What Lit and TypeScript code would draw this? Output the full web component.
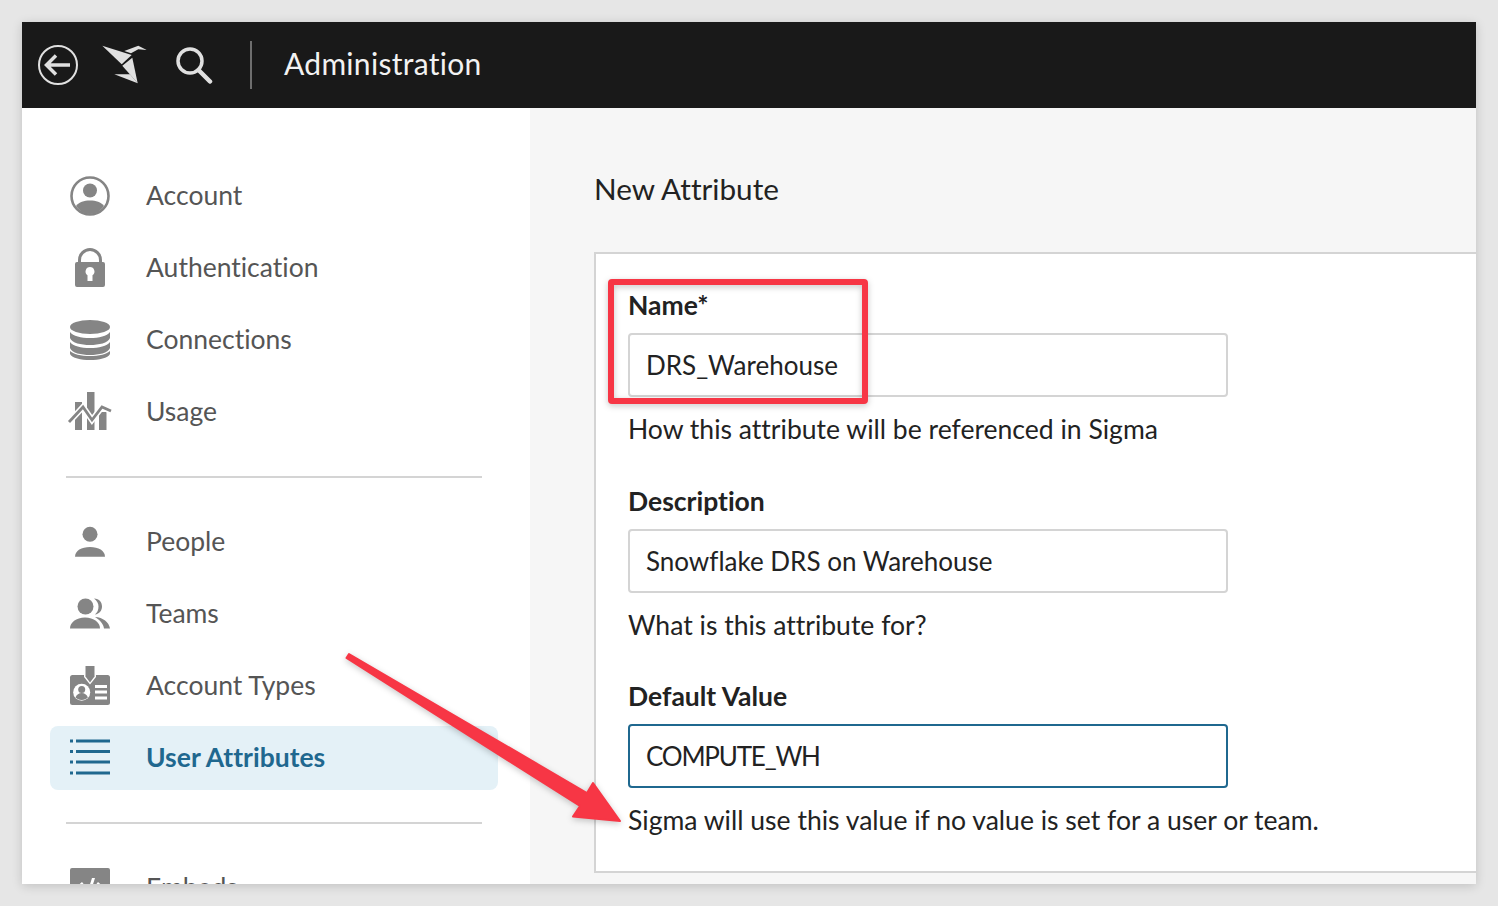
import { LitElement, html, css, svg } from "lit";
import { customElement } from "lit/decorators.js";

const icons: Record<string, unknown> = {
  account: svg`<circle cx="20" cy="20" r="18.5" fill="none" stroke="currentColor" stroke-width="2.6"/><circle cx="20" cy="14.5" r="7"/><path d="M6 30c3-4 8-5.500 14-5.500S31 26 34 30c-3.500 5-8 8-14 8S9.500 35 6 30z"/>`,
  lock: svg`<path d="M9.500 15v-3a10.500 10.500 0 0 1 21 0v3" fill="none" stroke="currentColor" stroke-width="3"/><path fill-rule="evenodd" d="M7 14h26a2 2 0 0 1 2 2v21a2 2 0 0 1-2 2H7a2 2 0 0 1-2-2V16a2 2 0 0 1 2-2zM20 19a4.500 4.500 0 0 0-2.500 8.200V33h5v-5.800A4.500 4.500 0 0 0 20 19z"/>`,
  db: svg`<ellipse cx="20" cy="7" rx="20" ry="7"/><path d="M0 12c3 4 11 6 20 6s17-2 20-6v6c-2 5-11 7-20 7S2 23 0 18z"/><path d="M0 22c3 4 11 6 20 6s17-2 20-6v6c-2 5-11 7-20 7S2 33 0 28z" /><path d="M0 31c3 3 11 5 20 5s17-2 20-5v3c-2 4-11 6-20 6S2 38 0 34z"/>`,
  usage: svg`<path d="M5 10h7v28H5zM17 0h7.500v38H17zM29 20h7.500v18H29z"/><path d="M-1 30L13 15l9 13 10-13 9 4" fill="none" stroke="#fff" stroke-width="6"/><path d="M-1 30L13 15l9 13 10-13 9 4" fill="none" stroke="currentColor" stroke-width="2.800"/>`,
  person: svg`<circle cx="20" cy="12.200" r="7.500"/><path d="M5 34.700c0-6 6.500-9.700 15-9.700s15 3.700 15 9.700z"/>`,
  teams: svg`<circle cx="15.500" cy="12.500" r="8"/><path d="M24 4.500c5.500 0 8 4 8 8s-2.500 7.500-7 8c2.500-2 3.500-5 3.500-8s-1.500-6-4.500-8z"/><path d="M0 34.500c0-6 6-11 15-11s15 5 15 11z"/><path d="M25 23c8 .5 14 5 15 11.500h-6c-.5-4.500-4-8.500-9-11.500z"/>`,
  types: svg`<rect x="0" y="9" width="40" height="30" rx="2.500"/><path d="M14 -1h12v12l-6 7.500-6-7.500z" fill="#fff"/><path d="M15.500 0h9v10.500L20 16.500l-4.500-6z"/><circle cx="11.700" cy="26.300" r="8.500" fill="#fff"/><circle cx="11.700" cy="23.500" r="3.500"/><path d="M5.500 31.500c1-3 3.500-4.500 6.200-4.500s5.200 1.500 6.200 4.500c-1.500 1.500-3.700 2.500-6.200 2.500s-4.700-1-6.200-2.500z"/><path d="M25 19h12v3H25zM25 24.500h12v3H25zM25 30.500h12v3H25z" fill="#fff"/>`,
  list: svg`<path d="M6 1.500h34v3H6zM6 12h34v3H6zM6 22.500h34v3H6zM6 33.500h34v3H6zM0 1.500h3v3H0zM0 12h3v3H0zM0 22.500h3v3H0zM0 33.500h3v3H0z"/>`,
  embed: svg`<path fill-rule="evenodd" d="M2 0h36a2 2 0 0 1 2 2v38H0V2a2 2 0 0 1 2-2zM12 14L4 21l8 7 2-2.500L8.500 21l5.500-4.500zM28 14l-2 2.500 5.500 4.500-5.500 4.500 2 2.500 8-7zM22 10l-7 22h3l7-22z"/>`,
};

const topNav = [
  { icon: "account", label: "Account" },
  { icon: "lock", label: "Authentication" },
  { icon: "db", label: "Connections" },
  { icon: "usage", label: "Usage" },
];
const midNav = [
  { icon: "person", label: "People" },
  { icon: "teams", label: "Teams" },
  { icon: "types", label: "Account Types" },
  { icon: "list", label: "User Attributes", active: true },
];
const lastNav = [{ icon: "embed", label: "Embeds" }];

const fields = [
  { label: "Name*", value: "DRS_Warehouse", help: "How this attribute will be referenced in Sigma" },
  { label: "Description", value: "Snowflake DRS on Warehouse", help: "What is this attribute for?" },
  { label: "Default Value", value: "COMPUTE_WH", help: "Sigma will use this value if no value is set for a user or team.", focus: true },
];

@customElement("app-root")
export class AppRoot extends LitElement {
  static override styles = css`
    :host {
      display: block;
      height: 906px;
      box-sizing: border-box;
      padding: 22px;
      background: #e6e6e6;
      font-family: "Lato", "Noto Sans", sans-serif;
      font-variant-ligatures: none;
      color: #1f1f1f;
    }

    .window {
      position: relative;
      height: 862px;
      display: flex;
      flex-direction: column;
      overflow: hidden;
      background: #fff;
      box-shadow: 0 2px 10px rgba(0, 0, 0, 0.16);
    }

    .header {
      flex: none;
      height: 86px;
      display: flex;
      align-items: center;
      background: #191919;
      color: #e0e0e0;
      padding-left: 16px;
    }

    .header svg {
      display: block;
      flex: none;
    }

    .logo {
      margin-left: 24px;
    }

    .search {
      margin-left: 28px;
    }

    .sep {
      width: 2px;
      height: 48px;
      background: #6e6e6e;
      margin-left: 37px;
      margin-right: 32px;
    }

    .title {
      font-size: 30px;
      line-height: 40px;
      margin-top: -4px;
      letter-spacing: 0.3px;
      color: #f2f2f2;
    }

    .body {
      flex: 1;
      min-height: 0;
      display: flex;
    }

    .sidebar {
      flex: none;
      width: 508px;
      box-sizing: border-box;
      padding: 56px 32px 0 28px;
      background: #fff;
      overflow: hidden;
    }

    .group {
      display: flex;
      flex-direction: column;
      gap: 8px;
    }

    .rule {
      height: 2px;
      background: #d4d4d4;
      margin: 32px 16px 32px 16px;
    }

    .item {
      flex: none;
      height: 64px;
      display: flex;
      align-items: center;
      gap: 36px;
      padding-left: 20px;
      border-radius: 8px;
      color: #555;
      font-size: 26.5px;
    }

    .item span {
      margin-bottom: 2px;
    }

    .item svg {
      flex: none;
      display: block;
      overflow: visible;
      fill: #858585;
      color: #858585;
    }

    .item.active {
      background: #e4f1f7;
      color: #1f688f;
      font-weight: 700;
    }

    .item.active svg {
      fill: #1f688f;
      color: #1f688f;
    }

    .main {
      flex: 1;
      min-width: 0;
      background: #f6f6f6;
      padding: 59px 0 0 64px;
      overflow: hidden;
    }

    .main h2 {
      margin: 0 0 41px;
      height: 44px;
      line-height: 44px;
      font-size: 29.7px;
      font-weight: 400;
      color: #222;
    }

    .card {
      box-sizing: border-box;
      width: 1000px;
      height: 621px;
      border: 2px solid #d4d4d4;
      background: #fff;
      padding: 32px 32px 0;
    }

    .field {
      width: 600px;
      margin-bottom: 32.5px;
    }

    .field label {
      display: block;
      height: 38px;
      line-height: 38px;
      font-size: 26.5px;
      font-weight: 700;
      color: #222;
      margin-bottom: 9px;
    }

    .input {
      box-sizing: border-box;
      height: 64px;
      display: flex;
      align-items: center;
      padding-left: 16px;
      border: 2px solid #d4d4d4;
      border-radius: 4px;
      background: #fff;
      font-size: 26px;
      color: #222;
    }

    .input.focus {
      border-color: #1f688f;
      letter-spacing: -1.2px;
    }

    .help {
      height: 40px;
      line-height: 40px;
      margin-top: 12px;
      font-size: 26.55px;
      white-space: nowrap;
      color: #222;
    }

    .overlay {
      position: absolute;
      left: 0;
      top: 0;
      width: 100%;
      height: 100%;
      pointer-events: none;
      filter: drop-shadow(0 2px 3px rgba(0, 0, 0, 0.22));
    }
  `;

  private navItem(n: { icon: string; label: string; active?: boolean }) {
    return html`<div class="item ${n.active ? "active" : ""}">
      <svg width="40" height="40" viewBox="0 0 40 40">${icons[n.icon]}</svg>
      <span>${n.label}</span>
    </div>`;
  }

  override render() {
    return html`
      <div class="window">
        <div class="header">
          <svg width="40" height="40" viewBox="0 0 40 40" fill="none" stroke="currentColor">
            <circle cx="20" cy="20" r="19" stroke-width="2" />
            <path d="M32 20H9M18 10.500L8.500 20l9.500 9.500" stroke-width="3.500" />
          </svg>
          <svg class="logo" width="45" height="40" viewBox="0 0 45 40" fill="currentColor">
            <path d="M0.300 0.700L29.700 10L19.700 19.300z" />
            <path d="M22.300 6L36.300 0.700L44.700 5L36.300 4.300L29 8.300z" />
            <path d="M20.300 20.700L30.300 12.700L35.700 38.300z" />
            <path d="M12.300 29.300H28L35.700 38.300z" />
          </svg>
          <svg class="search" width="38" height="38" viewBox="0 0 38 38" fill="none" stroke="currentColor">
            <circle cx="15" cy="15" r="12" stroke-width="3.500" />
            <path d="M23.500 24L35 35.500" stroke-width="4.500" stroke-linecap="round" />
          </svg>
          <div class="sep"></div>
          <div class="title">Administration</div>
        </div>
        <div class="body">
          <div class="sidebar">
            <div class="group">${topNav.map((n) => this.navItem(n))}</div>
            <div class="rule"></div>
            <div class="group">${midNav.map((n) => this.navItem(n))}</div>
            <div class="rule"></div>
            <div class="group">${lastNav.map((n) => this.navItem(n))}</div>
          </div>
          <div class="main">
            <h2>New Attribute</h2>
            <div class="card">
              ${fields.map(
                (f) => html`<div class="field">
                  <label>${f.label}</label>
                  <div class="input ${f.focus ? "focus" : ""}">${f.value}</div>
                  <div class="help">${f.help}</div>
                </div>`
              )}
            </div>
          </div>
        </div>
        <svg class="overlay" viewBox="22 22 1454 862">
          <rect x="611" y="282" width="254" height="119" rx="1" fill="none" stroke="#f73645" stroke-width="6" />
          <path d="M349 654L587 793L593 783L620 821L573 816.500L580 806L346.500 658Z" fill="#f73645" stroke="#f73645" stroke-width="2" stroke-linejoin="round" />
        </svg>
      </div>
    `;
  }
}
